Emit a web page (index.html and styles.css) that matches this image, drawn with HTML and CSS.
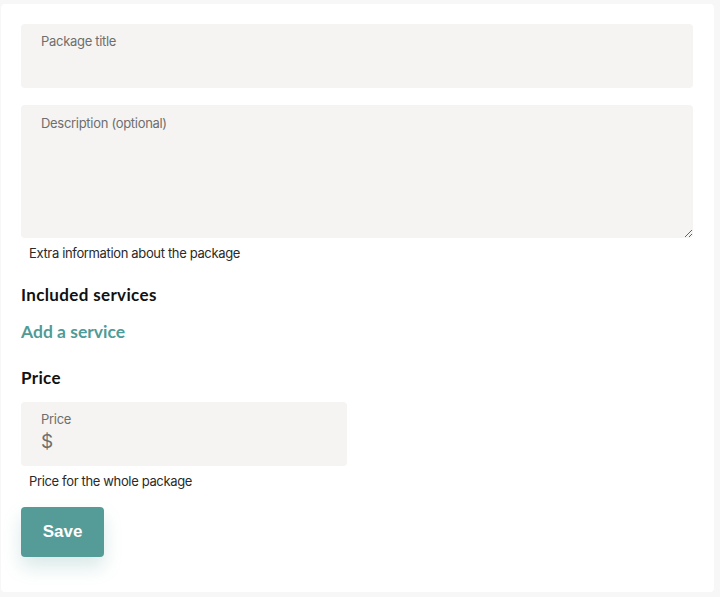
FILE: index.html
```html
<!DOCTYPE html>
<html lang="en">
<head>
<meta charset="utf-8">
<title>Package</title>
<link rel="stylesheet" href="styles.css">
</head>
<body>
<form class="card">
  <label class="field field-title">
    <span class="field-label">Package title</span>
    <input class="field-input" type="text">
  </label>

  <div class="field-group desc-group">
    <textarea class="field textarea" placeholder="Description (optional)"></textarea>
    <p class="helper">Extra information about the package</p>
  </div>

  <h2 class="section-title services-title">Included services</h2>
  <a class="add-link" href="#">Add a service</a>

  <h2 class="section-title price-title">Price</h2>
  <div class="field-group">
    <label class="field field-price">
      <span class="field-label">Price</span>
      <span class="price-value">$</span>
    </label>
    <p class="helper">Price for the whole package</p>
  </div>

  <button class="save-btn" type="button">Save</button>
</form>
</body>
</html>
```

FILE: styles.css
```css
html, body {
  margin: 0;
  padding: 0;
}

body {
  background: #f7f7f7;
  font-family: "Inter", "Noto Sans", sans-serif;
  width: 720px;
  height: 597px;
  overflow: hidden;
}

.card {
  box-sizing: border-box;
  margin: 4px 6px 0 1px;
  width: 713px;
  height: 588px;
  background: #ffffff;
  border-radius: 4px;
  padding: 20px 21px 20px 20px;
  display: flex;
  flex-direction: column;
  align-items: flex-start;
}

.field {
  box-sizing: border-box;
  display: flex;
  flex-direction: column;
  width: 672px;
  background: #f5f4f2;
  border-radius: 4px;
  border: none;
  padding: 8px 20px 0 20px;
  flex-shrink: 0;
}

.field-title {
  height: 64px;
}

.field-label {
  font-size: 13px;
  line-height: 18px;
  letter-spacing: -0.3px;
  color: #6e6e6e;
}

.field-input {
  border: none;
  background: transparent;
  outline: none;
  height: 26px;
  padding: 0;
  font: inherit;
}

.field-group {
  display: flex;
  flex-direction: column;
  align-items: flex-start;
}

.desc-group {
  margin-top: 17px;
}

.textarea {
  height: 133px;
  padding-top: 9px;
  font-family: "Inter", "Noto Sans", sans-serif;
  font-size: 13px;
  line-height: 18px;
  letter-spacing: -0.3px;
  color: #222;
  resize: vertical;
  outline: none;
}

.textarea::placeholder {
  color: #6e6e6e;
}

.helper {
  margin: 6px 0 0 8px;
  font-size: 13px;
  line-height: 18px;
  letter-spacing: -0.35px;
  color: #2a2a2a;
}

.section-title {
  margin: 0;
  font-family: "Lato", "Noto Sans", sans-serif;
  font-weight: 700;
  font-size: 17px;
  line-height: 22px;
  letter-spacing: 0.35px;
  color: #111111;
}

.services-title {
  margin-top: 22px;
}

.add-link {
  margin-top: 14px;
  font-family: "Lato", "Noto Sans", sans-serif;
  font-weight: 700;
  font-size: 17.5px;
  line-height: 24px;
  color: #4f9b98;
  text-decoration: none;
}

.price-title {
  margin-top: 23px;
}

.field-price {
  margin-top: 13px;
  width: 326px;
  height: 64px;
}

.price-value {
  margin-top: 2px;
  font-size: 19px;
  line-height: 24px;
  color: #6e6e6e;
}

.save-btn {
  margin-top: 17px;
  width: 83px;
  height: 50px;
  border: none;
  border-radius: 4px;
  background: #559b98;
  color: #ffffff;
  font-family: "Liberation Sans", Arial, sans-serif;
  font-weight: 700;
  font-size: 17px;
  box-shadow: 0 10px 18px rgba(85, 155, 152, 0.22);
  cursor: pointer;
}
```
